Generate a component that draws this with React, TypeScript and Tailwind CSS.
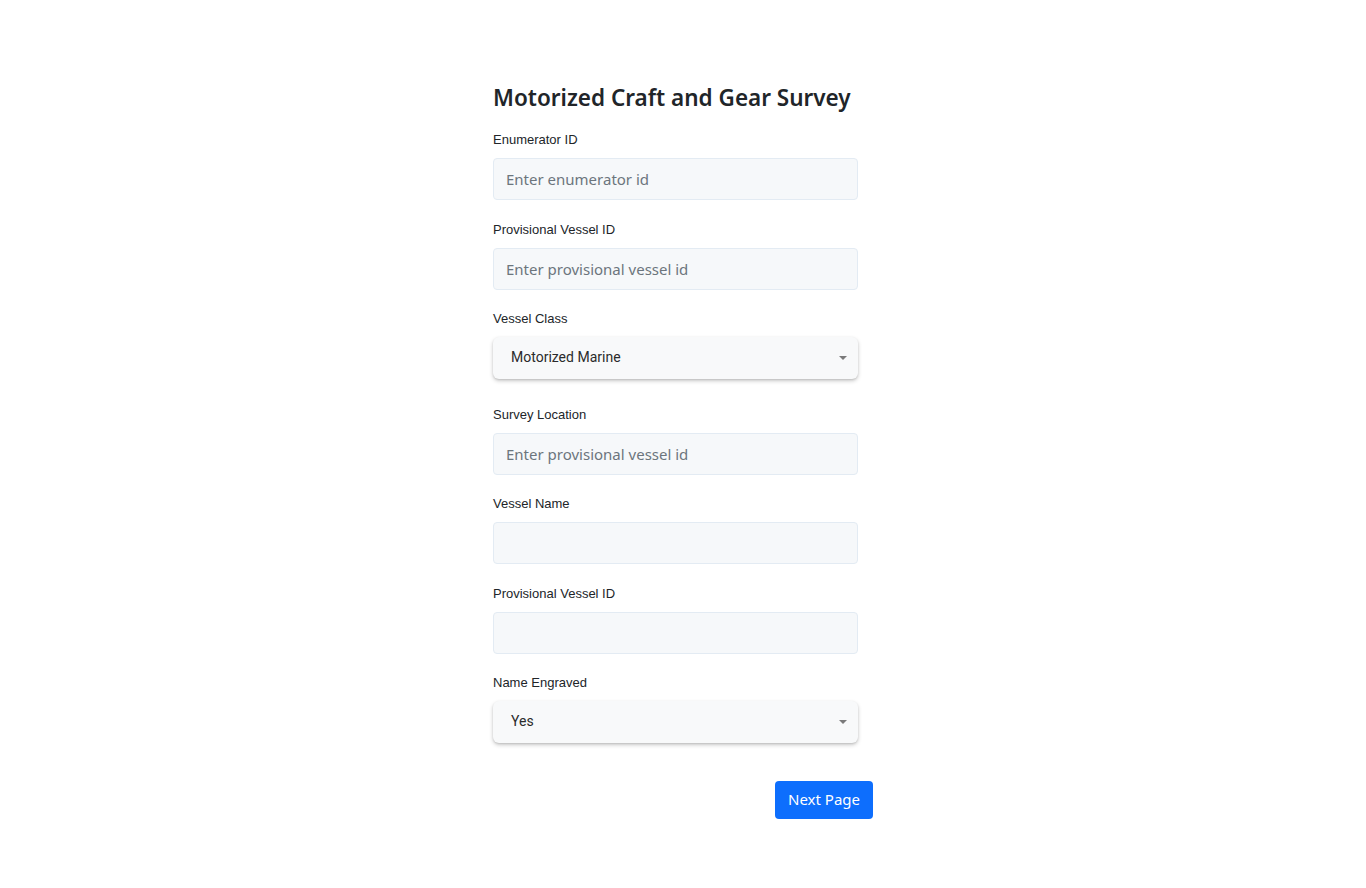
import React from 'react';

const Field = ({label, placeholder}: {label: string; placeholder?: string}) => (
    <div className="mb-[19.5px]">
        <label className="block text-[13px] leading-[19px] text-[#212529] mb-[9px] font-['Liberation_Sans',Arial,sans-serif]">{label}</label>
        <input
            className="w-[365px] h-[42px] rounded-[4px] border border-[#e3ebf3] bg-[#f6f8fa] px-[12px] text-[15px] text-[#212529] placeholder:text-[#6c757d] outline-none font-['Noto_Sans',sans-serif]"
            placeholder={placeholder}
        />
    </div>
);

const SelectField = ({label, value}: {label: string; value: string}) => (
    <div className="mb-[26px]">
        <label className="block text-[13px] leading-[19px] text-[#212529] mb-[8.5px] font-['Liberation_Sans',Arial,sans-serif]">{label}</label>
        <div className="w-[365px] h-[42px] rounded-[6px] bg-[#f8f9fa] shadow-[0_2px_4px_rgba(0,0,0,0.2),0_1px_2px_rgba(0,0,0,0.1)] flex items-center justify-between pl-[18px] pr-[11px]">
            <span className="text-[14px] text-[#2b2b2b] font-['Roboto',sans-serif]">{value}</span>
            <svg width="8" height="4" viewBox="0 0 8 4"><path d="M0 0 L8 0 L4 4 Z" fill="#7a7a7a"/></svg>
        </div>
    </div>
);

const App = () => {
    return (
        <div className="min-h-[888px] bg-white">
            <div className="w-[380px] mx-auto pt-[83px]">
                <h1 className="whitespace-nowrap text-[22.5px] leading-[30px] font-semibold text-[#212529] mb-[17px] font-['Noto_Sans',sans-serif]">Motorized Craft and Gear Survey</h1>
                <Field label="Enumerator ID" placeholder="Enter enumerator id"/>
                <Field label="Provisional Vessel ID" placeholder="Enter provisional vessel id"/>
                <SelectField label="Vessel Class" value="Motorized Marine"/>
                <Field label="Survey Location" placeholder="Enter provisional vessel id"/>
                <Field label="Vessel Name"/>
                <Field label="Provisional Vessel ID"/>
                <SelectField label="Name Engraved" value="Yes"/>
                <div className="flex justify-end mt-[38px]">
                    <button className="h-[38px] w-[98px] rounded-[4px] bg-[#0d6efd] text-white text-[15px] font-['Noto_Sans',sans-serif]">Next Page</button>
                </div>
            </div>
        </div>
    );
};

export default App;
